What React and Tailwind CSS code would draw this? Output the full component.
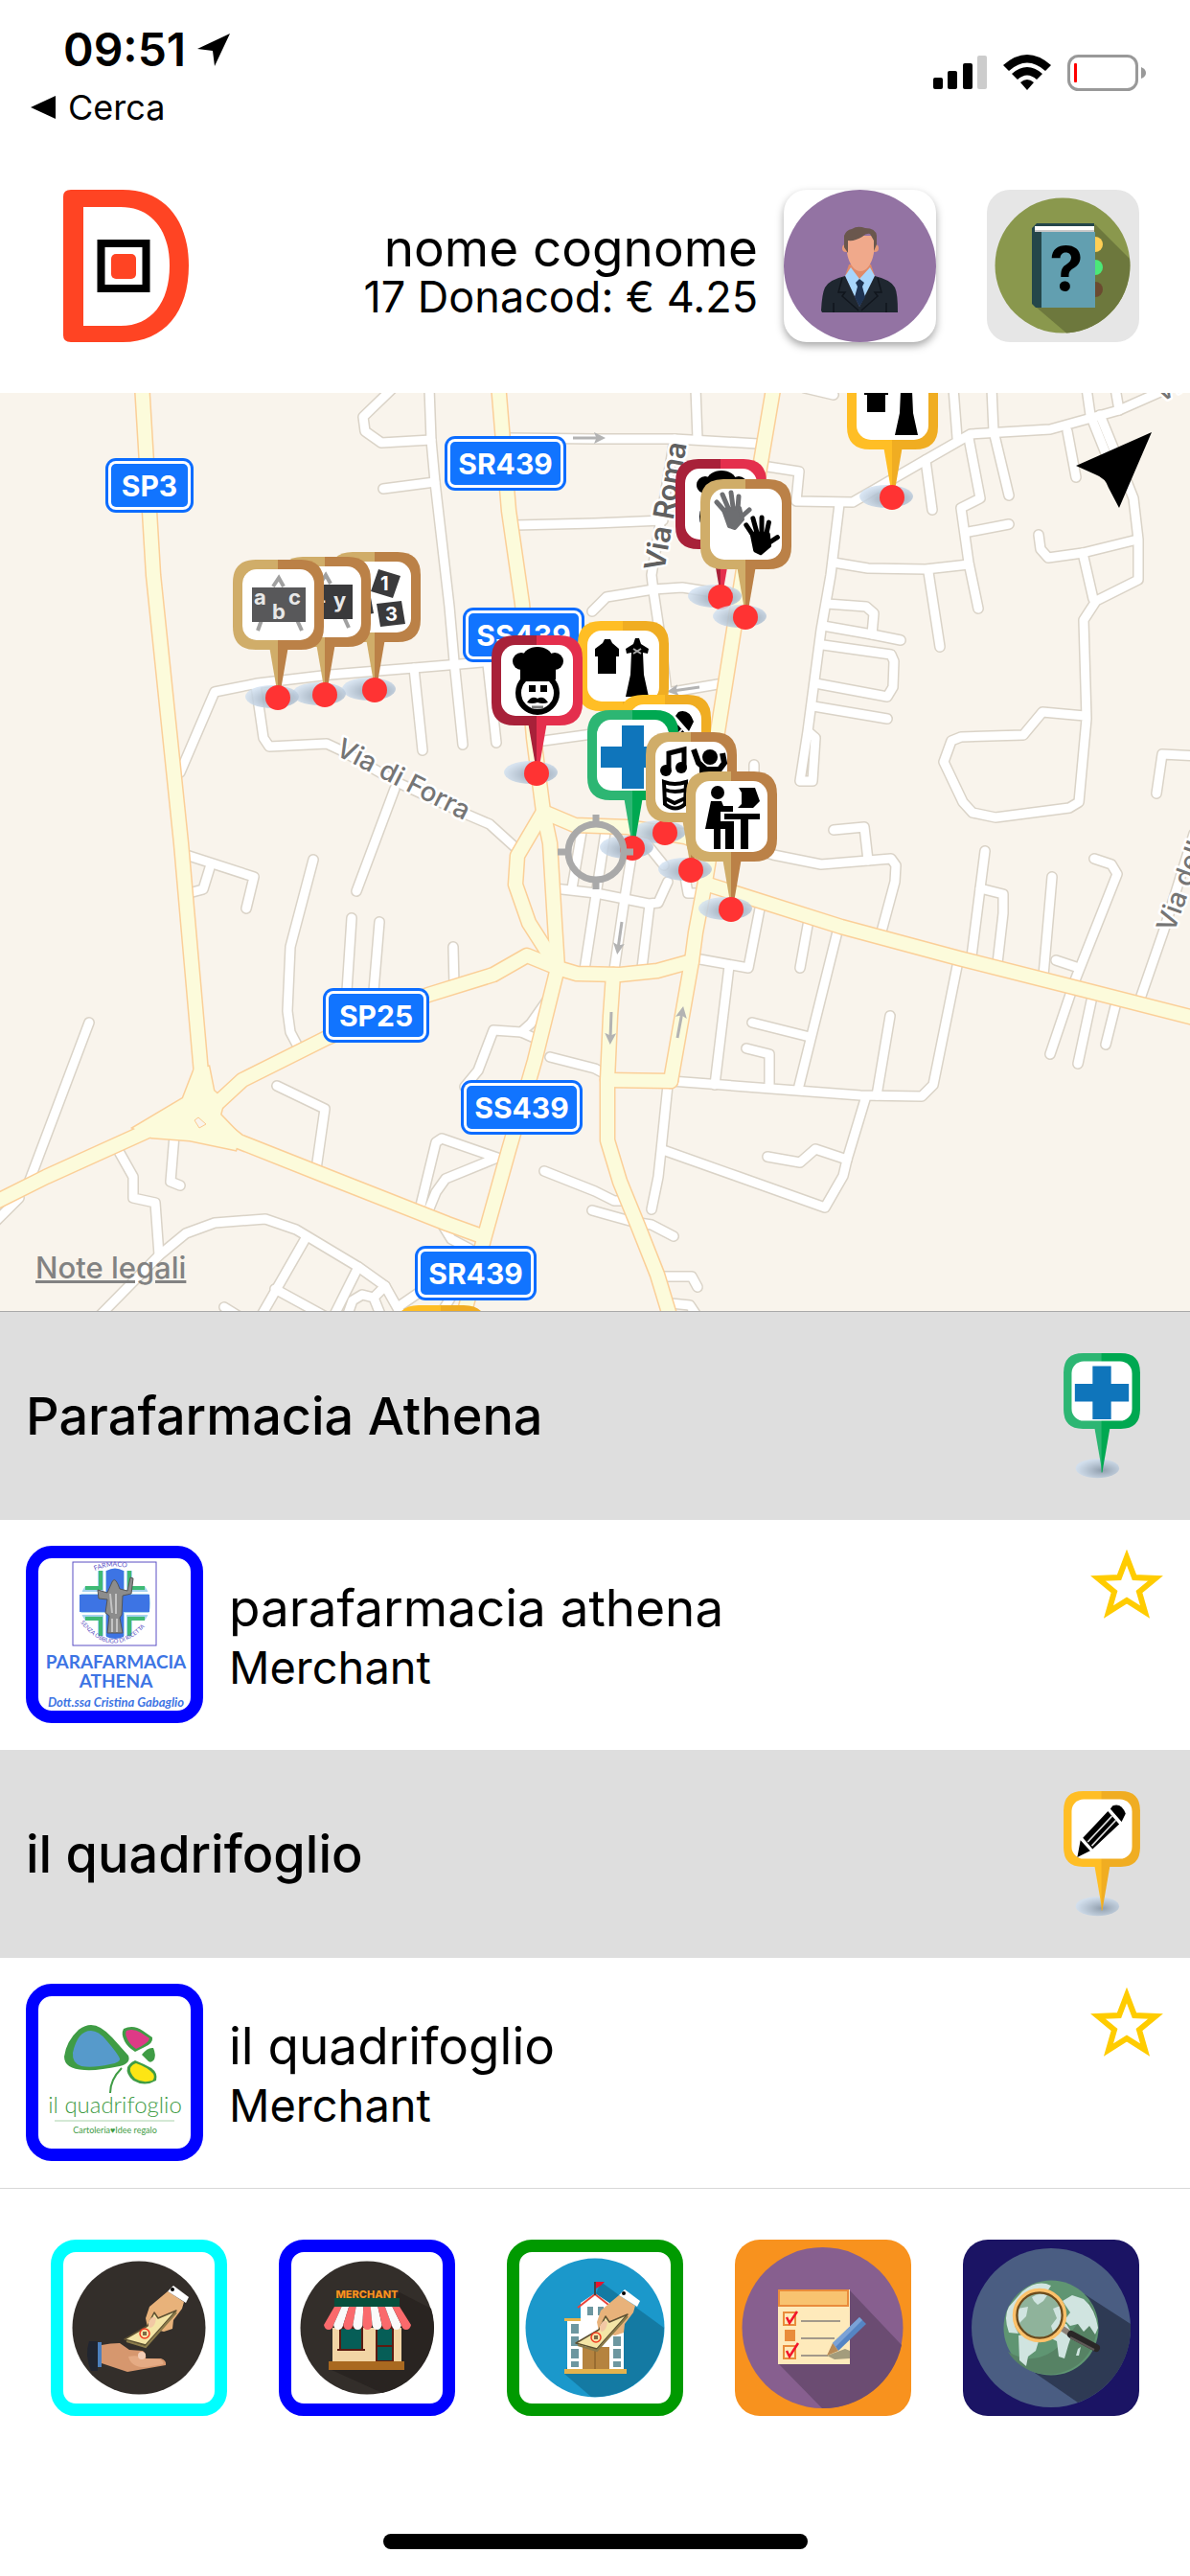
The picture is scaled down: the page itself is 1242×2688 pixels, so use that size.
import { useId } from 'react'

// minor streets, one "x,y x,y" polyline each
const STREETS = [
  '410,405 379,435 381,450 398,462 450,459',
  '448,405 450,459 454,503 469,633 474,690 483,777',
  '400,510 454,503',
  '188,806 224,722 269,713 345,704 432,697 515,690',
  '432,697 441,783',
  '509,693 518,775',
  '267,715 275,770 281,779 341,776 356,783 416,817 483,848 511,860 543,889',
  '412,823 372,930',
  '527,457 621,458 704,458 791,463',
  '538,548 621,546 692,543',
  '726,405 728,458',
  '704,458 680,600 682,617 688,657 696,723',
  '618,638 633,623 682,615 712,613 770,622',
  '660,730 696,723 755,713',
  '560,774 625,765',
  '787,798 787,830',
  '795,486 834,492 831,523 890,524 966,480 1013,453 1096,448 1168,428 1220,405',
  '840,405 870,412',
  '995,405 999,457',
  '1011,457 1023,520 1003,530 1011,587 1021,635',
  '1035,405 1037,450 1053,517',
  '1011,555 1053,547',
  '966,480 973,532',
  '1114,450 1123,498',
  '1134,405 1138,433 1154,473',
  '1164,405 1168,428',
  '1148,433 1166,477 1183,520 1188,563 1188,605 1144,627 1131,647 1134,750 1126,837 1116,843 1039,853 1015,848 1005,837 985,795 993,773 1003,769 1068,767 1088,743 1132,747',
  '1084,558 1086,573 1094,582 1130,577 1187,563',
  '1130,577 1141,625',
  '876,526 867,600 857,657 843,763 835,815 848,815 851,770 843,763',
  '870,587 906,593 966,594 1011,589',
  '969,597 981,675',
  '863,630 904,633 912,640 910,662',
  '859,653 910,662 940,668',
  '859,673 930,683 933,690 932,717 926,727 851,713',
  '849,737 926,750',
  '780,884 807,892 857,902 930,896 935,903 934,920 920,972',
  '870,866 902,863 906,898',
  '1207,828 1213,787 1250,789',
  '1028,888 1023,927 1014,998',
  '1023,927 1047,933 1047,953 1041,1005',
  '1098,915 1089,1018',
  '1142,896 1160,902 1166,912 1122,1023 1096,1100',
  '1102,1002 1126,1010',
  '1246,870 1215,970 1189,1045',
  '1141,1035 1125,1110',
  '1166,1042 1154,1090',
  '793,948 781,1010 725,1000',
  '761,1008 746,1132',
  '844,960 835,1010',
  '875,968 833,1137',
  '785,1067 845,1082',
  '779,1094 803,1100 803,1133',
  '700,1128 898,1143 962,1144 974,1132 1000,1003',
  '929,1060 915,1143',
  '903,1147 884,1210 880,1227 861,1260 771,1228 692,1200',
  '801,1207 835,1213 851,1199 884,1210',
  '697,1132 690,1200 687,1228 680,1262',
  '568,1222 621,1243 641,1253 655,1253',
  '618,1263 661,1275 680,1278 703,1290',
  '690,1332 722,1332 728,1343',
  '700,1360 720,1362 728,1374',
  '574,1103 621,1115 634,1122',
  '607,868 597,927',
  '632,868 615,980 610,1012',
  '660,887 652,937 641,1012',
  '578,927 622,932 677,943 687,942 697,920',
  '678,944 670,1010',
  '668,872 693,903',
  '715,915 718,932 730,932',
  '194,892 265,915 257,948',
  '220,902 212,928 197,932',
  '327,897 303,988 300,1055 303,1077 312,1094',
  '367,958 362,1034',
  '396,962 390,1034',
  '473,988 474,1028',
  '573,1041 554,1068 544,1077 515,1075 499,1117 485,1134',
  '544,1077 562,1085',
  '93,1067 30,1234',
  '121,1196 139,1228 139,1250 162,1255 166,1310',
  '182,1184 178,1233 188,1237',
  '289,1133 339,1157 330,1220',
  '438,1262 455,1192 461,1188 519,1208 465,1230 455,1244 446,1266',
  '103,1374 166,1310 194,1287 224,1276 277,1272 309,1283 374,1322 402,1342 420,1374',
  '319,1292 272,1374',
  '287,1345 340,1374',
  '374,1322 348,1374',
  '234,1364 250,1374',
  '362,1374 368,1357 378,1351 390,1354 398,1374',
  '390,1354 402,1342',
  '418,1362 450,1340',
  '458,1374 476,1345',
  '463,1280 471,1293 490,1303',
  '-6,1276 20,1250',
]

// provincial and state roads
const MAIN_ROADS = [
  '148,400 160,600 189,880 210,1120 214,1163',
  '520,400 531,533 545,630 557,770 567,847 574,880 579,963 582,1010',
  '567,847 540,893 538,923 552,963 582,1010',
  '567,847 600,861 655,863 715,873 742,884',
  '808,400 791,500 766,657 748,770 742,884 736,920 726,973 722,1003 700,1128',
  '736,922 878,967 1001,1000 1128,1032 1250,1063',
  '582,1010 602,1016 647,1017 686,1013 722,1003',
  '640,1017 637,1060 634,1127 634,1190 647,1233 665,1277 686,1330 700,1376',
  '634,1127 700,1128',
  '582,1010 558,1107 531,1200 505,1293 483,1376',
  '582,1010 550,997 515,1017 447,1038 341,1083 253,1127 214,1163',
  '214,1163 154,1180 48,1228 -8,1256',
  '214,1163 249,1191 345,1229 467,1277 503,1290',
]

const SHIELDS = [
  { label: 'SP3', x: 110, y: 478, w: 92 },
  { label: 'SR439', x: 464, y: 455, w: 127 },
  { label: 'SS439', x: 483, y: 634, w: 127 },
  { label: 'SP25', x: 337, y: 1031, w: 111 },
  { label: 'SS439', x: 481, y: 1127, w: 127 },
  { label: 'SR439', x: 433, y: 1300, w: 127 },
]

const ARROWS = [
  'M598,457H626',
  'M730,717L702,721',
  'M649,962L645,990',
  'M638,1056L637,1084',
  'M707,1083L712,1056',
]

const PIN_COLORS = {
  tan: ['#d0ad69', '#bb8147'],
  red: ['#a82139', '#e42f4d'],
  amber: ['#ffbe25', '#f0ad22'],
  green: ['#2db673', '#00a851'],
}

// x,y is the red dot at the foot of the pin
const PINS = [
  { x: 931, y: 519, color: 'amber', glyph: 'clothes' },
  { x: 391, y: 720, color: 'tan', glyph: 'numbers' },
  { x: 339, y: 725, color: 'tan', glyph: 'maths' },
  { x: 290, y: 728, color: 'tan', glyph: 'letters' },
  { x: 752, y: 623, color: 'red', glyph: 'chef' },
  { x: 778, y: 644, color: 'tan', glyph: 'hands' },
  { x: 650, y: 792, color: 'amber', glyph: 'clothes' },
  { x: 560, y: 807, color: 'red', glyph: 'chef' },
  { x: 694, y: 869, color: 'amber', glyph: 'pencil' },
  { x: 660, y: 885, color: 'green', glyph: 'cross' },
  { x: 721, y: 908, color: 'tan', glyph: 'music' },
  { x: 763, y: 949, color: 'tan', glyph: 'desk' },
  { x: 460, y: 1506, color: 'amber', glyph: 'clothes' },
]

function Hand() {
  return (
    <g strokeLinecap="round" fill="none" stroke="currentColor">
      <path d="M-8,-3L-16,-12M-4,-6L-10,-20M1,-7L-1,-22M6,-5L7,-18M9,4L18,-4" strokeWidth="5" />
      <path d="M-9,-4L8,-6L11,6L3,15L-3,13Z" fill="currentColor" strokeWidth="4" strokeLinejoin="round" />
    </g>
  )
}

function Board({ color, children }) {
  return (
    <>
      <path d="M42,28L48,19L53,28M30,63L26,74M67,63L72,74" stroke="#a0a0a0" strokeWidth="4" fill="none" />
      <path d="M20,29H76V65H20Z" fill={color} />
      <g fill="#e8e8e8" fontSize="22" fontWeight="700">{children}</g>
    </>
  )
}

const GLYPHS = {
  cross: <path d="M36,16H59V38H81V60H59V82H36V60H14V38H36Z" fill="#0f75bb" />,
  chef: (
    <>
      <circle cx="31" cy="27" r="9" />
      <circle cx="66" cy="27" r="9" />
      <ellipse cx="48" cy="22" rx="15" ry="10" />
      <path d="M30,22H67V46H30Z" />
      <ellipse cx="48" cy="60" rx="20" ry="20" fill="#fff" stroke="#000" strokeWidth="6" />
      <path d="M30,40H66V48H30Z" />
      <path d="M39,52h7v7h-7zM51,52h7v7h-7z" />
      <path d="M37,70Q42,62 48,66Q54,62 59,70Q54,72 48,70Q42,72 37,70" />
      <path d="M42,75H54" stroke="#777" strokeWidth="3" />
    </>
  ),
  clothes: (
    <>
      <path d="M28,19H34L36,23L43,29V37H40V55H21V37H18V29L26,23Z" />
      <path d="M60,18H64L66,24L74,29L73,34L68,33L69,56L74,79H50L55,56L56,33L51,34L50,29L58,24Z" />
      <path d="M58,29L66,34M66,29L58,34" stroke="#aaa" strokeWidth="2" />
    </>
  ),
  pencil: (
    <>
      <path d="M61,18Q72,14 77,28L72,38L58,22ZM55,25L69,41L36,72L24,58Z" />
      <path d="M21,61L33,74L17,82Z" />
      <path d="M30,63L60,31M35,68L65,36" stroke="#ddd" strokeWidth="2" />
    </>
  ),
  hands: (
    <>
      <g transform="translate(33 36)" className="text-[#6d6e71]"><Hand /></g>
      <g transform="translate(62 62) rotate(8)"><Hand /></g>
    </>
  ),
  letters: (
    <Board color="#58585a">
      <text x="22" y="47">a</text>
      <text x="41" y="62">b</text>
      <text x="58" y="47">c</text>
    </Board>
  ),
  maths: (
    <Board color="#3a3a3c">
      <text x="22" y="53">x+</text>
      <text x="56" y="53">y</text>
    </Board>
  ),
  numbers: (
    <g fontSize="20" fontWeight="700">
      <path d="M51,18L74,25L66,48L43,41ZM49,54L75,51L79,75L53,78ZM20,46L42,42L46,64L24,68Z" fill="#3a3a3c" />
      <text x="53" y="40" fill="#fff">1</text>
      <text x="58" y="72" fill="#fff">3</text>
    </g>
  ),
  music: (
    <>
      <path d="M24,38V22L40,18V36" fill="none" stroke="#000" strokeWidth="5" />
      <circle cx="21" cy="40" r="6" />
      <circle cx="37" cy="37" r="6" />
      <circle cx="67" cy="26" r="8" />
      <path d="M50,18L55,32L64,40H76L82,32L80,22" fill="none" stroke="#000" strokeWidth="6" />
      <path d="M56,36H78V50H56Z" />
      <path d="M19,52Q30,56 42,52L41,75Q31,84 20,75ZM20,60Q30,64 42,60M20,69L30,74L41,69" fill="none" stroke="#000" strokeWidth="4" />
    </>
  ),
  desk: (
    <>
      <circle cx="33" cy="22" r="7" />
      <path d="M26,31H37L39,36H49V42H36V52H50V81H41V60H36V81H29V60H20Z" />
      <path d="M40,44H77V50H65V81H57V50H40ZM55,17H72L77,31L70,38H54L58,34V22Z" />
    </>
  ),
}

// 95px wide badge with its stem, top left at 0,0
function Pin({ color, glyph, dot }) {
  const id = useId()
  const [left, right] = PIN_COLORS[color]
  return (
    <g>
      <defs>
        <radialGradient id={id} cx="0.6" cy="0.6" r="0.6">
          <stop offset="0" stopColor="#8f9dac" />
          <stop offset="1" stopColor="#cfdff0" stopOpacity="0.8" />
        </radialGradient>
      </defs>
      <ellipse cx={dot ? 41 : 42} cy="143" rx={dot ? 28 : 27} ry="12" fill={`url(#${id})`} />
      <path d="M38,90H48V148Z" fill={left} />
      <path d="M47,90H58L48,148H47Z" fill={right} />
      <path d="M48,0H24Q0,0 0,24V70Q0,94 24,94H48Z" fill={left} />
      <path d="M47,0H71Q95,0 95,24V70Q95,94 71,94H47Z" fill={right} />
      <rect x="10" y="10" width="75" height="74" rx="15" fill="#fff" />
      {GLYPHS[glyph]}
      {dot && <circle cx="47" cy="144" r="13" fill="#ff3333" />}
    </g>
  )
}

function StreetName({ x, y, angle, children, ...rest }) {
  return (
    <text
      transform={`translate(${x} ${y}) rotate(${angle})`}
      stroke="#fff"
      strokeWidth="5"
      strokeLinejoin="round"
      paintOrder="stroke"
      {...rest}
    >
      {children}
    </text>
  )
}

function Roads({ lines, width, color }) {
  return (
    <g fill="none" stroke={color} strokeWidth={width} strokeLinejoin="round" strokeLinecap="round">
      {lines.map((points) => <polyline key={points} points={points} />)}
    </g>
  )
}

function TownMap() {
  const junction = 'M203,1115L191,1146L139,1177L158,1187L198,1190L246,1200L251,1185L230,1163L234,1148L223,1138L218,1113Z'
  return (
    <section className="relative overflow-hidden border-b border-[#a9a9a9] bg-[#f9f4ec]">
      <svg viewBox="0 410 1242 958" className="block w-full" role="img" aria-label="Mappa">
        <Roads lines={STREETS} width={12} color="#dad3c7" />
        <Roads lines={STREETS} width={9} color="#fff" />
        <Roads lines={MAIN_ROADS} width={17} color="#fbcf98" />
        <path d={junction} fill="#fcfbdb" stroke="#fbcf98" strokeWidth="3" />
        <Roads lines={MAIN_ROADS} width={14} color="#fcfbdb" />
        <path d={junction} fill="#fcfbdb" />
        <path d="M203,1169L207,1166L215,1173L208,1177Z" fill="#f9f4ec" stroke="#fbc98f" strokeWidth="1" />

        <defs>
          <marker id="oneway" viewBox="0 0 10 10" refX="5" refY="5" markerWidth="12" markerHeight="12" markerUnits="userSpaceOnUse" orient="auto">
            <path d="M0,0L10,5L0,10L2,5Z" fill="#b3b3b3" />
          </marker>
        </defs>
        {ARROWS.map((d) => (
          <path key={d} d={d} stroke="#b3b3b3" strokeWidth="3" markerEnd="url(#oneway)" />
        ))}

        <StreetName x={349} y={787} angle={27} fontSize="28" fontWeight="500" fill="#757575">Via di Forra</StreetName>
        <StreetName x={693} y={597} angle={-80} fontSize="30" fontWeight="600" fill="#606060">Via Roma</StreetName>
        <StreetName x={1225} y={974} angle={-70} fontSize="28" fontWeight="500" fill="#757575">Via della</StreetName>
        <StreetName x={1212} y={420} angle={-28} fontSize="26" fontWeight="500" fill="#757575">Via</StreetName>

        {SHIELDS.map((s) => (
          <g key={`${s.x}-${s.y}`}>
            <rect x={s.x} y={s.y} width={s.w} height="57" rx="11" fill="#0b6cff" />
            <rect x={s.x + 3} y={s.y + 3} width={s.w - 6} height="51" rx="8" fill="#fff" />
            <rect x={s.x + 6} y={s.y + 6} width={s.w - 12} height="45" rx="5" fill="#1174ff" />
            <text x={s.x + s.w / 2} y={s.y + 40} textAnchor="middle" fontSize="30" fontWeight="700" fill="#fff">{s.label}</text>
          </g>
        ))}

        {PINS.map((p) => (
          <g key={`${p.x}-${p.y}`} transform={`translate(${p.x - 47} ${p.y - 144})`}>
            <Pin color={p.color} glyph={p.glyph} dot />
          </g>
        ))}

        <g fill="none" stroke="#a9a9a9">
          <circle cx="622" cy="889" r="29" strokeWidth="7" />
          <path d="M622,850V863M622,915V928M582,889H596M648,889H661" strokeWidth="7" />
        </g>
      </svg>

      <button type="button" aria-label="La mia posizione" className="absolute top-[41px] right-[40px]">
        <svg width="79" height="79" viewBox="0 0 79 79">
          <path d="M79,0L0,35L20,44Q31,48 34,58L45,79Z" />
        </svg>
      </button>
      <a href="#note" className="absolute bottom-[26px] left-[37px] text-[31px] leading-[38px] font-medium text-[#828282] underline">
        Note legali
      </a>
    </section>
  )
}

function StatusBar() {
  return (
    <div className="flex h-[145px] items-start justify-between pr-[46px]">
      <div>
        <div className="mt-[22px] ml-[66px] flex items-center gap-[12px] text-[48px] leading-[60px] font-semibold">
          09:51
          <svg width="34" height="34" viewBox="0 0 34 34"><path d="M34,0L0,16L16,18L18,34Z" /></svg>
        </div>
        <a href="#cerca" className="ml-[32px] flex items-center gap-[13px] text-[36px] leading-[60px]">
          <svg width="26" height="24" viewBox="0 0 26 24"><path d="M0,12L26,0V24Z" /></svg>
          Cerca
        </a>
      </div>
      <div className="mt-[57px] flex items-center gap-[17px]">
        <svg width="56" height="38" viewBox="0 0 56 38">
          <rect x="0" y="24" width="10" height="12" rx="2" />
          <rect x="15" y="17" width="10" height="19" rx="2" />
          <rect x="31" y="9" width="10" height="27" rx="2" />
          <rect x="46" y="1" width="10" height="35" rx="2" fill="#ccc" />
        </svg>
        <svg width="50" height="38" viewBox="0 0 50 38">
          <path d="M0,11Q25,-11 50,11L44,17Q25,0 6,17ZM9,20Q25,6 41,20L35,26Q25,17 15,26ZM18,29Q25,23 32,29L25,37Z" />
        </svg>
        <svg width="82" height="38" viewBox="0 0 82 38">
          <rect x="1.5" y="1.5" width="71" height="35" rx="10" fill="none" stroke="#999" strokeWidth="3" />
          <rect x="7" y="9" width="3" height="20" rx="1" fill="#f00" />
          <path d="M77,13Q82,15 82,19Q82,23 77,25Z" fill="#999" />
        </svg>
      </div>
    </div>
  )
}

function Logo() {
  return (
    <svg width="131" height="159" viewBox="0 0 131 159" role="img" aria-label="Donacod">
      <path fillRule="evenodd" fill="#ff4423" d="M8,0H62C106,0 131,32 131,79C131,127 106,159 62,159H8Q0,159 0,152V7Q0,0 8,0ZM21,18V142H60C92,142 111,118 111,79C111,42 92,18 60,18Z" />
      <rect x="39.500" y="56" width="47" height="47" fill="none" stroke="#000" strokeWidth="8" />
      <rect x="50" y="67" width="26" height="26" rx="5" fill="#ff4423" />
    </svg>
  )
}

function Avatar() {
  return (
    <svg viewBox="0 0 159 159" className="block w-full">
      <circle cx="79.500" cy="79.500" r="79.500" fill="#9373a3" />
      <path d="M68,78H91L95,90L79,104L64,90Z" fill="#e08a68" />
      <path d="M70,81L64,90L74,112L79,98L85,112L95,90L90,81L79,93Z" fill="#a8d6fc" />
      <path d="M39,126Q40,108 43,102Q47,94 64,90L79,122L95,90Q112,94 116,102Q119,108 119,128H40Z" fill="#1f2730" />
      <path d="M75,97L79,93L84,97L82,101L85,112L79,122L74,112L77,101Z" fill="#1e3352" />
      <path d="M61,92L57,107L64,107L61,111L78,126M98,92L102,107L95,107L98,111L81,126M52,128V118M107,128V118" fill="none" stroke="#11161d" strokeWidth="1.500" />
      <circle cx="65" cy="61" r="4" fill="#e79a77" />
      <circle cx="95" cy="61" r="4" fill="#e79a77" />
      <path d="M66,48H94V66C92,78 86,85 80,85C74,85 68,78 66,66Z" fill="#f0a98b" />
      <path d="M63,60V48Q65,42 71,41Q77,37 85,40Q96,40 97,48V57L94,64V53L90,46Q86,45 82,49Q74,54 67,53V66Z" fill="#6a574d" />
    </svg>
  )
}

function HelpBook() {
  return (
    <svg viewBox="0 0 159 159" className="block w-full">
      <circle cx="79" cy="79" r="70.500" fill="#8a984d" />
      <path d="M113,36L149,72A70.5,70.500 0 0 1 83,149.500L52,123Z" fill="#6d783d" />
      <circle cx="113" cy="57" r="8" fill="#ffcf55" />
      <circle cx="113" cy="81" r="8" fill="#4be878" />
      <circle cx="113" cy="104" r="8" fill="#6b4a30" />
      <path d="M52,35H112V44H58V123H51L47,119V40Z" fill="#24464a" />
      <path d="M50,38H112V44H50Z" fill="#fff" />
      <path d="M50,42H112V44H50Z" fill="#c9c9c9" />
      <path d="M57,44H113V123H57Z" fill="#629fb0" />
      <text x="83" y="105" textAnchor="middle" fontSize="63" fontWeight="700">?</text>
    </svg>
  )
}

function Header() {
  return (
    <header className="flex items-center justify-between py-[53px] pr-[53px] pl-[66px]">
      <Logo />
      <div className="flex items-center">
        <div className="mr-[27px] pt-3 text-right">
          <p className="text-[53px] leading-[52px]">nome cognome</p>
          <p className="text-[45px] leading-[50px]">17 Donacod: € 4.25</p>
        </div>
        <button type="button" aria-label="Profilo" className="mr-[53px] w-[159px] overflow-hidden rounded-3xl bg-white shadow-[0_4px_8px_rgba(0,0,0,0.35)]">
          <Avatar />
        </button>
        <button type="button" aria-label="Guida" className="w-[159px] overflow-hidden rounded-3xl bg-[#e6e6e6]">
          <HelpBook />
        </button>
      </div>
    </header>
  )
}

function AthenaLogo() {
  return (
    <svg viewBox="13 13 159 159" className="block w-full" fontFamily="Lato, sans-serif" fill="#3d74e4">
      <rect x="49" y="17" width="87" height="87" fill="#fff" stroke="#5a4fc4" strokeWidth="1" />
      <path d="M75,26H111V42H124Q130,50 130,60Q130,70 124,78H111V94H75V78H62Q56,70 56,60Q56,50 62,42H75Z" fill="#a5d3ee" />
      <path d="M78,26V44H62M108,26V44H124M78,94V76H62M108,94V76H124" fill="none" stroke="#3fba75" strokeWidth="4" />
      <path d="M82,26V49H58M104,26V49H128M82,94V71H58M104,94V71H128" fill="none" stroke="#fff" strokeWidth="2" />
      <path d="M84,26Q93,21 102,26V51H129V69H102V95Q93,99 84,95V69H56V51H84Z" />
      <path d="M89,40Q92,31 96,40L98,45L106,47L109,33L112,34L110,50L101,52L100,72L98,75L101,91H85L87,73L83,70L85,56L76,55L75,46L85,49Z" fill="#8c8c8c" stroke="#555" strokeWidth="1" />
      <path d="M88,50L90,70M94,50V71M90,76V90M95,76V90" stroke="#c4c4c4" strokeWidth="2" />
      <defs>
        <path id="athena-top" d="M72,26Q93,17 116,26" />
        <path id="athena-bottom" d="M57,80Q92,124 130,78" />
      </defs>
      <g fill="#5a4fc4">
        <text fontSize="7"><textPath href="#athena-top">FARMACO</textPath></text>
        <text fontSize="6"><textPath href="#athena-bottom">SENZA OBBLIGO DI RICETTA</textPath></text>
      </g>
      <text x="94" y="128" textAnchor="middle" fontSize="19" fontWeight="700">PARAFARMACIA</text>
      <text x="94" y="148" textAnchor="middle" fontSize="19" fontWeight="700">ATHENA</text>
      <text x="94" y="168" textAnchor="middle" fontSize="13" fontWeight="700" fontStyle="italic">Dott.ssa Cristina Gabaglio</text>
    </svg>
  )
}

function QuadrifoglioLogo() {
  return (
    <svg viewBox="13 13 159 159" className="block w-full" fontFamily="Lato, sans-serif" fill="#3f9c45">
      <path d="M68,43Q78,43 90,56L107,75Q110,83 98,86Q75,91 61,90Q40,89 40,76Q42,60 55,48Q62,43 68,43Z" />
      <path d="M68,49Q76,49 84,59Q96,73 98,78Q99,82 88,84Q70,88 58,86Q48,83 49,72Q54,49 68,49Z" fill="#569acb" />
      <path d="M102,47Q112,42 122,49L132,56Q133,62 124,66L114,71Q106,66 103,60Q99,52 102,47Z" />
      <path d="M105,49Q112,46 120,51L129,57Q128,62 115,68Q109,64 106,58Q103,52 105,49Z" fill="#de3a86" />
      <path d="M121,74Q127,66 133,67Q136,74 134,79Q131,83 128,81Z" />
      <path d="M114,80Q124,84 131,88Q138,93 136,101Q124,108 112,101Q104,94 106,87Q109,82 114,80Z" />
      <path d="M115,83Q127,87 133,94Q135,98 132,101Q122,104 114,99Q108,93 109,88Q111,84 115,83Z" fill="#fde514" />
      <path d="M100,88Q88,100 88,114" fill="none" stroke="#3f9c45" strokeWidth="2" />
      <text x="93" y="135" textAnchor="middle" fontSize="24" fontWeight="300">il quadrifoglio</text>
      <path d="M30,143H155" stroke="#a9d3ab" strokeWidth="1" />
      <text x="93" y="156" textAnchor="middle" fontSize="9">Cartoleria♥Idee regalo</text>
    </svg>
  )
}

const SHOPS = [
  { title: 'Parafarmacia Athena', name: 'parafarmacia athena', kind: 'Merchant', color: 'green', glyph: 'cross', Logo: AthenaLogo },
  { title: 'il quadrifoglio', name: 'il quadrifoglio', kind: 'Merchant', color: 'amber', glyph: 'pencil', Logo: QuadrifoglioLogo },
]

function Shop({ shop }) {
  const ShopLogo = shop.Logo
  return (
    <li>
      <div className="flex h-[217px] items-center justify-between bg-[#dedede] pr-[52px] pl-[27px]">
        <h2 className="text-[54px] leading-[66px] font-medium">{shop.title}</h2>
        <svg width="80" height="132" viewBox="0 0 95 157" className="shrink-0">
          <Pin color={shop.color} glyph={shop.glyph} />
        </svg>
      </div>
      <div className="flex p-[27px] pb-[28px]">
        <div className="w-[185px] shrink-0 overflow-hidden rounded-[27px] border-[13px] border-[#0000ff] bg-white">
          <ShopLogo />
        </div>
        <div className="ml-[27px] flex-1 pt-8">
          <h3 className="text-[53px] leading-[66px]">{shop.name}</h3>
          <p className="text-[47px] leading-[58px]">{shop.kind}</p>
        </div>
        <button type="button" aria-label={`Aggiungi ${shop.name} ai preferiti`} className="self-start pt-1">
          <svg width="78" height="74" viewBox="0 0 78 74">
            <path d="M39,8L47,29L69,30L52,44L58,65L39,53L20,65L26,44L9,30L31,29Z" fill="none" stroke="#ffcc00" strokeWidth="6" />
          </svg>
        </button>
      </div>
    </li>
  )
}

function GivingHand() {
  return (
    <>
      <path d="M122,54L103,70L99,82L101,92L118,96L127,93L128,84L137,72L139,65Z" fill="#e8b27a" />
      <path d="M128,48L144,60L141,66L122,54Z" fill="#fff" />
      <circle cx="127" cy="52" r="2" />
      <path d="M77,104L101,90L108,76L112,82L131,74L99,110Z" fill="#f4e5a6" stroke="#5c5032" strokeWidth="1.500" strokeLinejoin="round" />
      <path d="M79,106L99,112L131,76" fill="none" stroke="#8b7b4a" strokeWidth="2" />
      <circle cx="98" cy="98" r="5" fill="#f7e0a5" stroke="#f13c22" strokeWidth="1.500" />
      <path d="M96,96h4v4h-4z" fill="#7b6a45" />
      <path d="M102,86Q106,78 110,82Q109,91 104,92Q101,90 102,86" fill="#f2c8a4" />
    </>
  )
}

function DonateIcon() {
  return (
    <>
      <circle cx="92" cy="92" r="69.500" fill="#332e2a" />
      <path d="M40,106H49V137H42Q35,120 40,106Z" fill="#202530" />
      <path d="M49,107H53V133H49Z" fill="#4c7fbd" />
      <path d="M53,110Q62,108 72,108L82,115L96,116Q100,119 99,124L115,124Q121,126 120,131L97,135L80,138L53,129Z" fill="#d6976e" />
      <path d="M81,122Q92,120 99,124L114,125Q119,128 117,130L100,133Q84,134 81,122Z" fill="#e5ab84" />
      <circle cx="95" cy="121" r="4" fill="#f3cdb6" />
      <GivingHand />
    </>
  )
}

function MerchantIcon() {
  return (
    <>
      <circle cx="92" cy="92" r="69.500" fill="#332e2a" />
      <path d="M126,55L159,72A69.5,69.500 0 0 1 108,160L55,136Z" fill="#292421" />
      <text x="92" y="61" textAnchor="middle" fontSize="11" fontWeight="800" fill="#f7931e">MERCHANT</text>
      <path d="M56,92H128V128H56Z" fill="#f2d5a5" />
      <path d="M58,61H126V70H58Z" fill="#064f3c" />
      <path d="M64,92H87V115H64Z" fill="#065e57" stroke="#5c1a10" strokeWidth="2" />
      <path d="M61,115H90" stroke="#5c1a10" strokeWidth="2" />
      <path d="M102,92H119V127H102Z" fill="#065e57" stroke="#5c1a10" strokeWidth="2" />
      <path d="M102,111H119" stroke="#5c1a10" strokeWidth="2" />
      {[0, 1, 2, 3, 4, 5, 6, 7, 8].map((i) => {
        const top = 58 + (i * 68) / 9
        const low = 47 + (i * 91) / 9
        return (
          <path
            key={i}
            d={`M${top},70H${top + 7.6}L${low + 10.1},89Q${low + 9},94 ${low + 5},94Q${low + 1},94 ${low},89Z`}
            fill={i % 2 ? '#fafafa' : '#fa6a6c'}
          />
        )
      })}
      <path d="M52,127H131V136H52Z" fill="#a96920" />
    </>
  )
}

function SchoolIcon() {
  return (
    <>
      <circle cx="92" cy="92" r="72.500" fill="#1b98cb" />
      <path d="M98,44L164,92A72.5,72.500 0 0 1 88,164L60,140Z" fill="#147aa3" />
      <path d="M63,85H122V135H63Z" fill="#fff" />
      <path d="M67,88h8v10h-8zM67,101h8v10h-8zM67,114h8v10h-8zM111,88h8v10h-8zM111,101h8v10h-8zM111,114h8v10h-8zM67,127h8v6h-8zM111,127h8v6h-8z" fill="#6d97a0" />
      <path d="M60,82H125V85H60ZM60,135H125V140H60Z" fill="#e4b24e" />
      <path d="M77,82V66L92,56L107,66V112H77Z" fill="#fff" />
      <path d="M74,71L92,57L110,71" fill="none" stroke="#e8443c" strokeWidth="2" />
      <path d="M84,70h6v9h-6zM95,70h6v9h-6z" fill="#6d97a0" />
      <path d="M92,44V58" stroke="#444" strokeWidth="2" />
      <path d="M93,44H102L98,48L93,51Z" fill="#e8112d" />
      <path d="M79,112H107V135H79Z" fill="#b5833f" />
      <path d="M92,112V135" stroke="#7d5724" strokeWidth="1" />
      <g transform="translate(-5 4)"><GivingHand /></g>
    </>
  )
}

function ListIcon() {
  return (
    <>
      <circle cx="91.500" cy="92" r="84" fill="#875f8f" />
      <path d="M119,52L174,110A84,84 0 0 1 91,176L46,130Z" fill="#6b4c72" />
      <path d="M45,52H120V130H45Z" fill="#feeabb" />
      <path d="M46,53H118V69H46Z" fill="#f8c370" stroke="#e98c3b" strokeWidth="2" />
      <path d="M51,76h12v13h-12zM51,111h12v13h-12z" fill="#feeabb" stroke="#e98c3b" strokeWidth="2" />
      <path d="M52,94h11v12h-11z" fill="#e98c3b" />
      <path d="M54,81L57,87L65,75M54,116L57,122L66,108" fill="none" stroke="#f3142c" strokeWidth="2.500" />
      <path d="M69,85H110M69,103H104M69,121H97" stroke="#a3998a" strokeWidth="2" />
      <path d="M96,121L115,114L120,116V124L104,125Z" fill="#a39c7c" />
      <path d="M130,81L137,88L108,116L102,108Z" fill="#5585c4" />
      <path d="M130,81L133,84L105,112L102,108Z" fill="#7ba2d6" />
      <path d="M102,108L108,116L96,121Z" fill="#b98a55" />
    </>
  )
}

function SearchIcon() {
  return (
    <>
      <circle cx="92" cy="92" r="83" fill="#4a5d82" />
      <path d="M127,57L175,88A83,83 0 0 1 120,170L75,139Z" fill="#2e3a54" />
      <circle cx="92" cy="92" r="49.500" fill="#5f9572" />
      <path d="M47,117Q94,145 132,64A50,50 0 1 1 47,117Z" fill="#568264" />
      <g fill="#d0e4e0">
        <path d="M62,54Q78,41 92,48L88,54L78,56L74,64L64,68L66,76L58,82L54,90L58,98L48,97Q42,80 48,70Z" />
        <path d="M58,100L70,98L79,106L76,116L68,122L66,132L59,126Z" />
        <path d="M104,64L114,58L126,62Q138,72 141,92L138,99L132,90L126,96L120,88L112,90L106,84L112,76Z" />
        <path d="M90,94L96,88L108,88L114,98L110,110L106,124L100,122L98,106L90,102Z" />
        <path d="M120,114L123,112L121,121L118,121Z" />
      </g>
      <circle cx="80" cy="79" r="26" fill="#8fb39b" />
      <path d="M72,60Q80,54 88,58L84,64L78,68L74,64ZM57,72L68,70L66,80L60,86L58,88ZM94,72L104,68L104,88L94,96L92,90L98,82Z" fill="#d0e4e0" />
      <circle cx="80" cy="79" r="24" fill="none" stroke="#6b4a1c" strokeWidth="3" />
      <circle cx="80" cy="79" r="26.500" fill="none" stroke="#fcc16a" strokeWidth="3.500" />
      <path d="M104,93L113,99" stroke="#8b8178" strokeWidth="6" />
      <path d="M113,99L139,113" stroke="#2a2727" strokeWidth="8" strokeLinecap="round" />
      <path d="M112,102L137,115" stroke="#5f5a58" strokeWidth="2" />
    </>
  )
}

const TABS = [
  { label: 'Dona', style: 'bg-white border-[#00ffff]', inset: true, Icon: DonateIcon },
  { label: 'Merchant', style: 'bg-white border-[#0000ff]', inset: true, Icon: MerchantIcon },
  { label: 'Enti', style: 'bg-white border-[#009a00]', inset: true, Icon: SchoolIcon },
  { label: 'Elenco', style: 'bg-[#f8921e] border-[#f8921e]', Icon: ListIcon },
  { label: 'Cerca', style: 'bg-[#1b1464] border-[#1b1464]', Icon: SearchIcon },
]

function TabBar() {
  return (
    <nav className="border-t border-[#d8d8d8] px-[53px] pt-[53px]">
      <div className="flex justify-between">
        {TABS.map(({ label, style, inset, Icon }) => (
          <button
            key={label}
            type="button"
            aria-label={label}
            className={`w-[184px] overflow-hidden rounded-[26px] ${inset ? 'border-[13px]' : 'border-0'} ${style}`}
          >
            <svg viewBox={inset ? '13 13 158 158' : '0 0 184 184'} className="block w-full">
              <Icon />
            </svg>
          </button>
        ))}
      </div>
      <div className="mx-auto mt-[123px] mb-[27px] h-4 w-[443px] rounded-full bg-black" />
    </nav>
  )
}

export default function App() {
  return (
    <div className="bg-white font-['Inter',sans-serif] text-black">
      <StatusBar />
      <Header />
      <TownMap />
      <ul>
        {SHOPS.map((shop) => <Shop key={shop.title} shop={shop} />)}
      </ul>
      <TabBar />
    </div>
  )
}
